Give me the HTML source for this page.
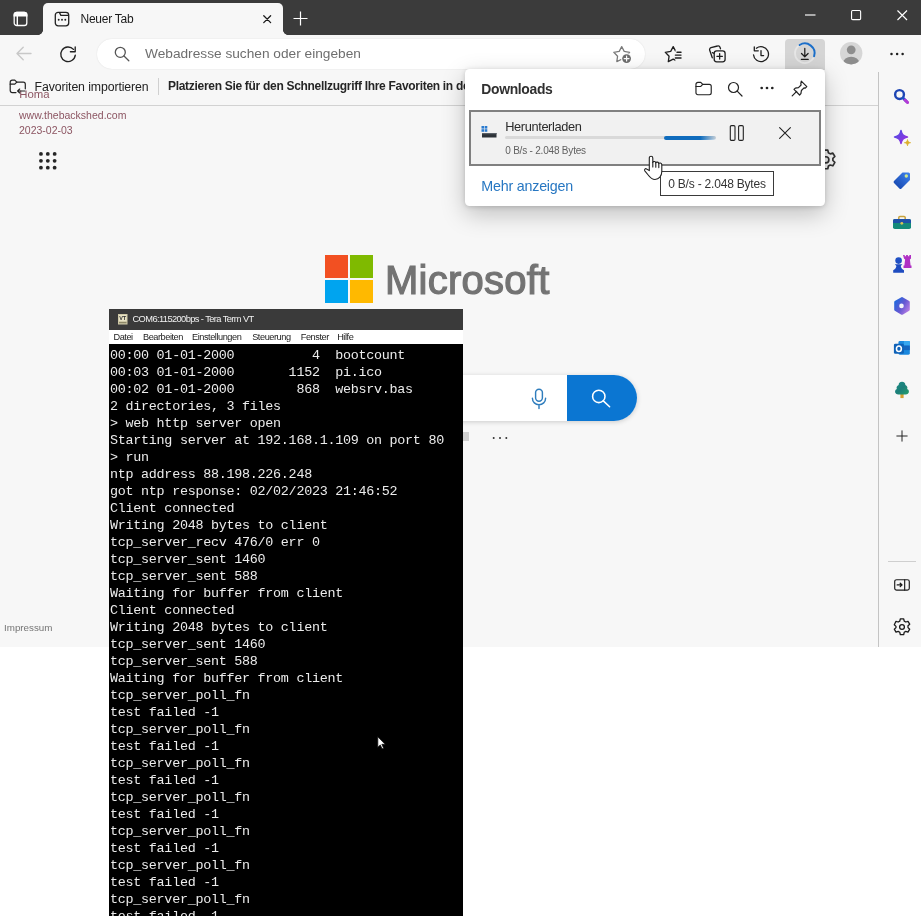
<!DOCTYPE html>
<html lang="de"><head><meta charset="utf-8"><title>Neuer Tab</title>
<style>
*{box-sizing:border-box;margin:0;padding:0}
html,body{width:921px;height:916px;overflow:hidden;background:#fff;font-family:"Liberation Sans",sans-serif;}
#root{will-change:transform;position:relative;width:921px;height:916px;overflow:hidden;background:#fff}
.abs{position:absolute}
#titlebar{left:0;top:0;width:921px;height:35px;background:#3b3b3b}
#tab{left:43px;top:3px;width:240px;height:32px;background:#f7f7f7;border-radius:5px 5px 0 0}
#tab .t{position:absolute;left:37.5px;top:8.5px;font-size:12px;color:#1b1b1b;white-space:nowrap;letter-spacing:-0.25px}
#toolbar{left:0;top:35px;width:921px;height:37px;background:#f7f7f7}
#addr{left:97px;top:39px;width:548px;height:30px;background:#fff;border-radius:15px;box-shadow:0 0 1.5px rgba(0,0,0,.12)}
#addr .t{position:absolute;left:48px;top:7px;font-size:13.7px;color:#6e6e6e;white-space:nowrap}
#favbar{left:0;top:72px;width:921px;height:33px;background:#f7f7f7}
#page{left:0;top:105px;width:878px;height:542px;background:#f7f7f7;border-top:1px solid #d2d2d2}
#sidebar{left:878px;top:72px;width:43px;height:575px;background:#f7f7f7;border-left:1px solid #c4c4c4}
svg{position:absolute;overflow:visible}
#tmenu span{position:absolute;top:2px}
</style></head><body><div id="root">

<div id="titlebar" class="abs"></div>
<div id="tab" class="abs"><div class="t">Neuer Tab</div></div>
<div id="toolbar" class="abs"></div>
<div class="abs" style="left:38px;top:30px;width:5px;height:5px;background:radial-gradient(circle at 0 0,#3b3b3b 4.6px,#f7f7f7 5.2px)"></div>
<div class="abs" style="left:283px;top:30px;width:5px;height:5px;background:radial-gradient(circle at 100% 0,#3b3b3b 4.6px,#f7f7f7 5.2px)"></div>

<div id="addr" class="abs"><div class="t">Webadresse suchen oder eingeben</div></div>
<div id="favbar" class="abs"></div>
<div id="page" class="abs"></div>
<div id="sidebar" class="abs"></div>


<!-- tab actions icon -->
<svg style="left:12.5px;top:11px" width="15" height="15.5" viewBox="0 0 15 15.5" fill="none" stroke="#fff" stroke-width="1.3"><rect x="1.2" y="1.3" width="12.6" height="13.2" rx="2.6"/><path d="M4.3 5V14.5" stroke-width="1.4"/><path d="M1.2 4.9V3.9a2.6 2.6 0 0 1 2.6-2.6h7.4a2.6 2.6 0 0 1 2.6 2.6V4.9z" fill="#fff"/></svg>
<!-- tab favicon -->
<svg style="left:54px;top:11px" width="16" height="16" viewBox="0 0 16 16" fill="none" stroke="#222" stroke-width="1.3" stroke-linejoin="round"><rect x="1.3" y="1.3" width="13.4" height="13.6" rx="2.8"/><path d="M5.4 1.5L6.9 4.4H14.6"/><circle cx="4.7" cy="8.7" r="0.95" fill="#222" stroke="none"/><circle cx="8" cy="8.7" r="0.95" fill="#222" stroke="none"/><circle cx="11.3" cy="8.7" r="0.95" fill="#222" stroke="none"/></svg>
<!-- tab close -->
<svg style="left:263.3px;top:15.4px" width="8.4" height="8.4" viewBox="0 0 11 11" stroke="#1b1b1b" stroke-width="1.7" stroke-linecap="round"><path d="M1 1L10 10M10 1L1 10"/></svg>
<!-- new tab plus -->
<svg style="left:293px;top:11px" width="15" height="15" viewBox="0 0 15 15" stroke="#fff" stroke-width="1.2"><path d="M7.5 0.5V14.5M0.5 7.5H14.5"/></svg>
<!-- window controls -->
<svg style="left:805px;top:14.3px" width="10.5" height="2" viewBox="0 0 11 2" stroke="#fff" stroke-width="1.2"><path d="M0 1H11"/></svg>
<svg style="left:850.7px;top:10.2px" width="10.2" height="10.2" viewBox="0 0 11 11" fill="none" stroke="#fff" stroke-width="1.2"><rect x="0.6" y="0.6" width="9.8" height="9.8" rx="1.2"/></svg>
<svg style="left:897px;top:10px" width="10.5" height="10.5" viewBox="0 0 11 11" stroke="#fff" stroke-width="1.2"><path d="M0.5 0.5L10.5 10.5M10.5 0.5L0.5 10.5"/></svg>
<!-- back -->
<svg style="left:16px;top:46px" width="16" height="15" viewBox="0 0 16 15" fill="none" stroke="#c8c8c8" stroke-width="1.4" stroke-linecap="round" stroke-linejoin="round"><path d="M15 7.5H1.2M7.2 1.2L1 7.5L7.2 13.8"/></svg>
<!-- refresh -->
<svg style="left:59px;top:45px" width="18" height="18" viewBox="0 0 18 18" fill="none" stroke="#222" stroke-width="1.35" stroke-linecap="round" stroke-linejoin="round"><path d="M14.5 4.4A7.3 7.3 0 1 0 16.3 10.2"/><path d="M16.2 1.9V6.7H11.4"/></svg>
<!-- addr search icon -->
<svg style="left:114px;top:46px" width="16" height="16" viewBox="0 0 16 16" fill="none" stroke="#555" stroke-width="1.3" stroke-linecap="round"><circle cx="6.3" cy="6.3" r="5"/><path d="M10 10L14.8 14.8"/></svg>
<!-- add favorite star -->
<svg style="left:0;top:0" width="921" height="80" viewBox="0 0 921 80" fill="none" stroke-linejoin="round" stroke-linecap="round"><path d="M621.7 46.6 L624.2 51.4 L629.6 52.3 L625.8 56.2 L626.6 61.6 L621.7 59.2 L616.8 61.6 L617.6 56.2 L613.8 52.3 L619.2 51.4Z" stroke="#7a7a7a" stroke-width="1.25"/><circle cx="626.6" cy="58.6" r="5.6" fill="#fff"/><circle cx="626.6" cy="58.6" r="4.4" fill="#6e6e6e"/><path d="M626.6 56.2v4.8M624.2 58.6h4.8" stroke="#fff" stroke-width="1.2"/></svg>
<!-- favorites -->
<svg style="left:0;top:0" width="921" height="80" viewBox="0 0 921 80" fill="none" stroke="#1f1f1f" stroke-width="1.3" stroke-linejoin="round" stroke-linecap="round"><path d="M673.2 46.6 L675.7 51.4 L681.1 52.3 L677.3 56.2 L678.1 61.6 L673.2 59.2 L668.3 61.6 L669.1 56.2 L665.3 52.3 L670.7 51.4Z"/><rect x="675.3" y="50.4" width="8" height="13" fill="#f7f7f7" stroke="none"/><path d="M677 52.3H681M675.4 55.1H681M675.4 57.9H681" stroke-width="1.45"/></svg>
<!-- collections -->
<svg style="left:0;top:0" width="921" height="80" viewBox="0 0 921 80" fill="none" stroke="#1f1f1f" stroke-width="1.3" stroke-linejoin="round" stroke-linecap="round"><path d="M712.3 57.8 709.7 50.3a2 2 0 0 1 1.3-2.6l6.5-1.7a2 2 0 0 1 2.5 1.3l.5 1.5"/><path d="M714.2 53.5 712.4 52.6"/><rect x="714.2" y="50.9" width="10.9" height="10.9" rx="2.5" fill="#f7f7f7"/><path d="M719.65 53.6v5.5M716.9 56.35h5.5"/></svg>
<!-- history -->
<svg style="left:0;top:0" width="921" height="80" viewBox="0 0 921 80" fill="none" stroke="#1f1f1f" stroke-width="1.3" stroke-linejoin="round" stroke-linecap="round"><path d="M756.4 48.2A7.5 7.5 0 1 1 753.5 54.8"/><path d="M754.3 46.8V50.8H758.3"/><path d="M761 50.6V55.6H763.6"/></svg>
<!-- downloads button -->
<div class="abs" style="left:785.4px;top:39px;width:39.4px;height:31px;background:#d5d5d5;border-radius:4px 4px 0 0"></div>
<svg style="left:0;top:0" width="921" height="80" viewBox="0 0 921 80" fill="none" stroke-linecap="round" stroke-linejoin="round"><circle cx="804.8" cy="53.3" r="9.8" stroke="#e6e6e6" stroke-width="1.8"/><path d="M799.6 45.0A9.8 9.8 0 0 1 814.1 56.3" stroke="#1b6ec8" stroke-width="2"/><path d="M804.8 48.4V56.6M801.5 53.5L804.8 56.8L808.1 53.5M801.4 59.4H808.2" stroke="#1f1f1f" stroke-width="1.25"/></svg>
<!-- profile -->
<svg style="left:839.5px;top:42.4px" width="22.4" height="22.4" viewBox="0 0 24 24"><defs><clipPath id="pc"><circle cx="12" cy="12" r="12"/></clipPath></defs><circle cx="12" cy="12" r="12" fill="#d6d6d6"/><g clip-path="url(#pc)" fill="#8d8d8d"><circle cx="12" cy="8.4" r="4.7"/><ellipse cx="12" cy="22.3" rx="8.6" ry="6.5"/></g></svg>
<!-- more -->
<svg style="left:889px;top:51.9px" width="16" height="4" viewBox="0 0 16 4" fill="#1f1f1f"><circle cx="2.5" cy="2" r="1.25"/><circle cx="8.1" cy="2" r="1.25"/><circle cx="13.6" cy="2" r="1.25"/></svg>
<!-- favbar -->
<svg style="left:9.3px;top:78.6px;z-index:1" width="18" height="16" viewBox="0 0 18 16" fill="none" stroke="#222" stroke-width="1.2" stroke-linejoin="round" stroke-linecap="round"><path d="M7 13.6H3.2a2 2 0 0 1-2-2V3.2a2 2 0 0 1 2-2h2.6l2 2h6.5a2 2 0 0 1 2 2V9.8"/><path d="M1.2 5.2h4.6l2-2"/><path d="M15.9 12H8.8M10.7 10l-2.1 2 2.1 2" stroke-width="1.1"/></svg>
<div class="abs" style="left:34.5px;top:79.5px;font-size:12.3px;color:#222;white-space:nowrap;letter-spacing:-0.1px">Favoriten importieren</div>
<div class="abs" style="left:158px;top:78px;width:1px;height:17px;background:#d0d0d0"></div>
<div class="abs" style="left:168px;top:79px;width:297px;overflow:hidden;font-size:12px;font-weight:bold;color:#262626;white-space:nowrap;letter-spacing:-0.3px">Platzieren Sie für den Schnellzugriff Ihre Favoriten in der Favoritenleiste.</div>

<!-- sidebar icons -->
<svg style="left:892.7px;top:87.6px" width="16.8" height="16.8" viewBox="0 0 18 18" fill="none"><defs><linearGradient id="g1" x1="0" y1="0" x2="1" y2="1"><stop offset="0" stop-color="#1a52c8"/><stop offset=".6" stop-color="#2a3fc0"/><stop offset="1" stop-color="#b03ad8"/></linearGradient></defs><circle cx="7" cy="7" r="4.7" stroke="#1d45b4" stroke-width="2.6"/><path d="M11 11L15.6 15.6" stroke="url(#g1)" stroke-width="3" stroke-linecap="round"/><path d="M12.8 12.8L15.6 15.6" stroke="#b23bd6" stroke-width="3" stroke-linecap="round"/></svg>
<svg style="left:893px;top:129.3px" width="20" height="20" viewBox="0 0 20 20"><defs><linearGradient id="g2" x1="0" y1="0" x2="1" y2="1"><stop offset="0" stop-color="#4a4de6"/><stop offset="1" stop-color="#a030dc"/></linearGradient></defs><path d="M8 1.6C8.6 5.2 10.8 7.4 14.4 8 10.8 8.6 8.6 10.8 8 14.4 7.4 10.8 5.2 8.6 1.6 8 5.2 7.4 7.4 5.2 8 1.6z" fill="url(#g2)" stroke="url(#g2)" stroke-width="1.6" stroke-linejoin="round"/><path d="M14.5 10.6c.3 1.9 1.2 2.8 3.1 3.1-1.9.3-2.8 1.2-3.1 3.1-.3-1.9-1.2-2.8-3.1-3.1 1.9-.3 2.8-1.2 3.1-3.1z" fill="#dcb02e" stroke="#dcb02e" stroke-width=".8" stroke-linejoin="round"/></svg>
<svg style="left:892px;top:170px" width="20" height="20" viewBox="0 0 20 20"><defs><linearGradient id="g3" x1="0" y1="1" x2="1" y2="0"><stop offset="0" stop-color="#1240a8"/><stop offset="1" stop-color="#3f84ee"/></linearGradient></defs><path d="M10.5 2.5h6a1.5 1.5 0 0 1 1.5 1.5v6L9.5 18.5a1.5 1.5 0 0 1-2.1 0L2 13a1.5 1.5 0 0 1 0-2.1z" fill="url(#g3)"/><circle cx="14.3" cy="6" r="1.7" fill="#cfe88a"/></svg>
<svg style="left:892px;top:213px" width="20" height="18" viewBox="0 0 20 18"><path d="M6.8 6.5V4.6a1.2 1.2 0 0 1 1.2-1.2h4a1.2 1.2 0 0 1 1.2 1.2v1.9" fill="none" stroke="#c8a23c" stroke-width="1.5"/><rect x="1" y="6" width="18" height="10" rx="1.8" fill="#14897a"/><path d="M1 10V7.8A1.8 1.8 0 0 1 2.8 6h14.4A1.8 1.8 0 0 1 19 7.8V10z" fill="#1e50a8"/><circle cx="9.8" cy="10.3" r="1.4" fill="#d8c455"/></svg>
<svg style="left:891px;top:253px" width="22" height="22" viewBox="0 0 22 22"><path d="M12 2h1.7v1.3h1.4V2h1.8v1.3h1.4V2H20v3.6l-1.1 1 .7 6h.9v2.4h-8V12.6h.9l.7-6-1.1-1z" fill="#b030c4"/><circle cx="7.6" cy="7.6" r="3.3" fill="#2050c4"/><path d="M3.8 11.2h7.6l-1.6 1.7c.4 2.2 1.6 3.4 3.2 4.4v2.5H2.2v-2.5c1.6-1 2.8-2.2 3.2-4.4z" fill="#1f4cc0"/></svg>
<svg style="left:892px;top:296px" width="20" height="20" viewBox="0 0 20 20"><defs><linearGradient id="g6" x1="0" y1="0.2" x2="1" y2="0.9"><stop offset="0" stop-color="#2468dc"/><stop offset=".5" stop-color="#6458d2"/><stop offset="1" stop-color="#ba7ee4"/></linearGradient></defs><path d="M10 2.2l6.6 3.8v7.8L10 17.6l-6.6-3.8V6z" fill="url(#g6)" stroke="url(#g6)" stroke-width="2.4" stroke-linejoin="round"/><circle cx="9.5" cy="9.9" r="2.3" fill="#f4f4fa"/></svg>
<svg style="left:893.2px;top:338.6px" width="18.2" height="18.6" viewBox="0 0 20 20"><rect x="6" y="2" width="12.5" height="15.0" rx="1.5" fill="#1a88de"/><rect x="12" y="2" width="6.5" height="5" fill="#36a7f0"/><rect x="12" y="7" width="6.5" height="5" fill="#1466c0"/><rect x="1" y="5" width="11.0" height="11.0" rx="1.5" fill="#0f62b8"/><ellipse cx="6.5" cy="10.5" rx="2.7" ry="3" fill="none" stroke="#fff" stroke-width="1.7"/></svg>
<svg style="left:892.7px;top:381.3px" width="18" height="17.5" viewBox="0 0 20 21" preserveAspectRatio="none"><defs><linearGradient id="g8" x1="0" y1="0" x2="1" y2="1"><stop offset="0" stop-color="#1c8f86"/><stop offset=".5" stop-color="#1c7f7a"/><stop offset="1" stop-color="#27a06a"/></linearGradient></defs><rect x="8.2" y="14.5" width="3.6" height="6" fill="#d6a032"/><path d="M10 1c2.4 0 3.9 1.8 3.7 3.9 2 .8 2.9 3 2 4.8 2.2 1 2.8 3.8.9 5.5-1.3 1.1-3.3 1.1-6.6 1.1s-5.3 0-6.6-1.1c-1.9-1.7-1.3-4.5.9-5.5-.9-1.8 0-4 2-4.8C6.1 2.8 7.6 1 10 1z" fill="url(#g8)"/></svg>
<svg style="left:895.7px;top:429.7px" width="12" height="12" viewBox="0 0 14 14" stroke="#222" stroke-width="1.15"><path d="M7 0.5V13.5M0.5 7H13.5"/></svg>
<div class="abs" style="left:888px;top:561px;width:28px;height:1px;background:#cfcfcf"></div>
<svg style="left:894px;top:578.9px" width="16" height="11.8" viewBox="0 0 18 14" preserveAspectRatio="none" fill="none" stroke="#1b1b1b" stroke-width="1.3" stroke-linejoin="round" stroke-linecap="round"><rect x="0.8" y="0.8" width="16.4" height="12.4" rx="2.2"/><path d="M12 0.8V13.2"/><path d="M3.6 7H9M7 5l2 2-2 2" stroke-width="1.5"/></svg>
<svg style="left:892.2px;top:617.1px" width="20" height="20" viewBox="0 0 20 20" fill="none" stroke="#1b1b1b" stroke-width="1.3" stroke-linejoin="round"><path d="M8.3 1.8h3.4l.5 2.3 1.6.9 2.2-.7 1.7 2.9-1.7 1.6v1.8l1.7 1.6-1.7 2.9-2.2-.7-1.6.9-.5 2.3H8.3l-.5-2.3-1.6-.9-2.2.7-1.7-2.9 1.7-1.6V9.4L2.3 7.8 4 4.3l2.2.7 1.6-.9z"/><circle cx="10" cy="10" r="2.4"/></svg>
<!--SECTION:chrome-icons-->

<!-- watermark -->
<div class="abs" style="left:19.2px;top:87.6px;font-size:11.4px;line-height:13px;color:#8c5562;white-space:nowrap;clip-path:inset(3px 0 0 0)">Homa</div>
<div class="abs" style="left:19px;top:109px;font-size:10.5px;color:#8c5562;white-space:nowrap">www.thebackshed.com</div>
<div class="abs" style="left:19px;top:124px;font-size:10.5px;color:#8c5562;white-space:nowrap">2023-02-03</div>
<!-- app grid -->
<svg style="left:39.4px;top:152.4px" width="17.6" height="17.6" viewBox="0 0 18 18" fill="#262626"><circle cx="2" cy="2" r="1.95"/><circle cx="9" cy="2" r="1.95"/><circle cx="16" cy="2" r="1.95"/><circle cx="2" cy="9" r="1.95"/><circle cx="9" cy="9" r="1.95"/><circle cx="16" cy="9" r="1.95"/><circle cx="2" cy="16" r="1.95"/><circle cx="9" cy="16" r="1.95"/><circle cx="16" cy="16" r="1.95"/></svg>
<!-- page settings gear (partly hidden) -->
<svg style="left:813.6px;top:148.2px" width="23.6" height="23.6" viewBox="0 0 20 20" fill="none" stroke="#333" stroke-width="1.4" stroke-linejoin="round"><path d="M8.3 1.8h3.4l.5 2.3 1.6.9 2.2-.7 1.7 2.9-1.7 1.6v1.8l1.7 1.6-1.7 2.9-2.2-.7-1.6.9-.5 2.3H8.3l-.5-2.3-1.6-.9-2.2.7-1.7-2.9 1.7-1.6V9.4L2.3 7.8 4 4.3l2.2.7 1.6-.9z"/><circle cx="10" cy="10" r="2.6"/></svg>
<!-- Microsoft logo -->
<div class="abs" style="left:325px;top:255px;width:23px;height:23px;background:#f25022"></div>
<div class="abs" style="left:350px;top:255px;width:23px;height:23px;background:#7fba00"></div>
<div class="abs" style="left:325px;top:280px;width:23px;height:23px;background:#00a4ef"></div>
<div class="abs" style="left:350px;top:280px;width:23px;height:23px;background:#ffb900"></div>
<div id="mslogo" class="abs" style="left:385px;top:255.5px;font-size:40px;line-height:48px;color:#737373;white-space:nowrap;letter-spacing:0.25px;-webkit-text-stroke:1.2px #737373">Microsoft</div>
<!-- search box -->
<div class="abs" style="left:241px;top:375px;width:396px;height:46px;border-radius:23px;background:#fff;box-shadow:0 1px 5px rgba(0,0,0,.18);overflow:hidden"><div class="abs" style="left:326px;top:0;width:70px;height:46px;background:#0b76d2"></div></div>
<svg style="left:529px;top:388px" width="20" height="22" viewBox="0 0 20 22" fill="none" stroke="#2f7dbd" stroke-width="1.45" stroke-linecap="round"><rect x="6.6" y="1.2" width="6.8" height="12" rx="3.4"/><path d="M3.4 10.2a6.6 6.6 0 0 0 13.2 0M10 16.8V20.5"/></svg>
<svg style="left:590px;top:387px" width="22" height="22" viewBox="0 0 22 22" fill="none" stroke="#fff" stroke-width="1.55" stroke-linecap="round"><circle cx="8.8" cy="9.4" r="6.2"/><path d="M13.3 13.9L19.6 19.8"/></svg>
<div class="abs" style="left:463px;top:432px;width:6px;height:9px;background:#cfcfcf"></div>
<svg style="left:492px;top:436px" width="16" height="4" viewBox="0 0 16 4" fill="#333"><circle cx="1.7" cy="2" r="1"/><circle cx="8" cy="2" r="1"/><circle cx="14.3" cy="2" r="1"/></svg>
<div class="abs" style="left:4px;top:622px;font-size:9.8px;color:#767676;white-space:nowrap">Impressum</div>
<!--SECTION:page-->

<div id="dl" class="abs" style="left:465px;top:69px;width:360px;height:137px;background:#fff;border-radius:4.5px;box-shadow:0 8px 24px rgba(0,0,0,.23),0 1px 5px rgba(0,0,0,.16)"></div>
<div class="abs" style="left:481.3px;top:81.3px;font-size:13.9px;font-weight:bold;color:#303030;white-space:nowrap;letter-spacing:-0.32px" id="dlh">Downloads</div>
<!-- folder -->
<svg style="left:694.6px;top:81.4px" width="17.4" height="15" viewBox="0 0 18 15" fill="none" stroke="#222" stroke-width="1.2" stroke-linejoin="round" stroke-linecap="round"><path d="M1 3.2a2 2 0 0 1 2-2h3l2 2h6.8a2 2 0 0 1 2 2v6.8a2 2 0 0 1-2 2H3a2 2 0 0 1-2-2z"/><path d="M1 5.4h5l2-2.2"/></svg>
<!-- search -->
<svg style="left:727px;top:81px" width="16" height="16" viewBox="0 0 16 16" fill="none" stroke="#222" stroke-width="1.2" stroke-linecap="round"><circle cx="6.5" cy="6.5" r="5"/><path d="M10.2 10.2L15 15"/></svg>
<!-- dots -->
<svg style="left:760px;top:85.9px" width="14" height="4" viewBox="0 0 14 4" fill="#222"><circle cx="1.7" cy="2" r="1.35"/><circle cx="7" cy="2" r="1.35"/><circle cx="12.3" cy="2" r="1.35"/></svg>
<!-- pin -->
<svg style="left:791px;top:80px" width="17" height="17" viewBox="0 0 17 17" fill="none" stroke="#222" stroke-width="1.2" stroke-linejoin="round" stroke-linecap="round"><path d="M10.3 1.2l5.5 5.5-1.5 1.5-1.3-.3-2.6 2.6-.5 3.2-1.3 1.3L3 9.4l1.3-1.3 3.2-.5 2.6-2.6-.3-1.3z"/><path d="M5.7 11.3L1.2 15.8"/></svg>
<!-- item -->
<div class="abs" style="left:469px;top:110px;width:352px;height:56px;background:#f1f1f1;border:2px solid #808080"></div>
<svg style="left:481px;top:126px" width="16" height="12" viewBox="0 0 16 12"><rect x="0.5" y="0" width="2.6" height="2.6" fill="#2a7bd0"/><rect x="3.7" y="0" width="2.6" height="2.6" fill="#2a7bd0"/><rect x="0.5" y="3.2" width="2.6" height="2.6" fill="#2a7bd0"/><rect x="3.7" y="3.2" width="2.6" height="2.6" fill="#2a7bd0"/><rect x="1" y="7" width="14.5" height="4.5" fill="#2d3238"/><rect x="1" y="7" width="14.5" height="1.2" fill="#5a6068"/></svg>
<div class="abs" style="left:505.2px;top:119.3px;font-size:12.8px;color:#2b2b2b;white-space:nowrap;letter-spacing:-0.37px" id="dlt">Herunterladen</div>
<div class="abs" style="left:505px;top:136px;width:211px;height:3px;background:#d9d9d9;border-radius:2px"></div>
<div class="abs" style="left:664px;top:136px;width:52px;height:4px;border-radius:2px;background:linear-gradient(90deg,#0f6cbd 0,#0f6cbd 70%,rgba(15,108,189,0.1) 100%)"></div>
<div class="abs" style="left:505.2px;top:144.8px;font-size:10px;color:#616161;white-space:nowrap;letter-spacing:-0.2px" id="dls">0 B/s - 2.048 Bytes</div>
<!-- pause -->
<svg style="left:729px;top:125px" width="16" height="16" viewBox="0 0 16 16" fill="none" stroke="#222" stroke-width="1.1"><rect x="1.3" y="0.6" width="4.7" height="14.8" rx="1.2"/><rect x="9.6" y="0.6" width="4.7" height="14.8" rx="1.2"/></svg>
<!-- close -->
<svg style="left:779px;top:127px" width="12" height="12" viewBox="0 0 12 12" stroke="#222" stroke-width="1.1" stroke-linecap="round"><path d="M0.6 0.6L11.4 11.4M11.4 0.6L0.6 11.4"/></svg>
<div class="abs" style="left:481.3px;top:178.2px;font-size:14.3px;color:#2777c2;white-space:nowrap;letter-spacing:-0.22px" id="dlm">Mehr anzeigen</div>
<!-- tooltip -->
<div class="abs" style="left:660px;top:171px;width:114px;height:25px;background:#fff;border:1px solid #3a3a3a"></div>
<div class="abs" style="left:668.2px;top:177px;font-size:12px;color:#333;white-space:nowrap;letter-spacing:-0.2px" id="dltt">0 B/s - 2.048 Bytes</div>
<!--SECTION:downloads-->
<div id="term" class="abs" style="left:109px;top:309px;width:354px;height:607px;background:#000;overflow:hidden">
<div class="abs" style="left:0;top:0;width:354px;height:20.5px;background:#3a3a3a"></div>
<svg style="left:8.5px;top:4.7px" width="9.5" height="10.5" viewBox="0 0 9.5 10.5"><rect x="0" y="0" width="9.5" height="10.5" fill="#cfc9a8"/><rect x="1" y="1" width="7.5" height="6" fill="#e8e3c4"/><text x="1.2" y="6.3" font-family="Liberation Sans, sans-serif" font-size="5.5" font-weight="bold" fill="#333">VT</text><rect x="1" y="8" width="7.5" height="1.3" fill="#8d8868"/></svg>
<div class="abs" style="left:23.5px;top:5px;font-size:9.3px;letter-spacing:-0.6px;color:#f2f2f2;white-space:nowrap">COM6:115200bps - Tera Term VT</div>
<div class="abs" id="tmenu" style="left:0;top:20.5px;width:354px;height:14.5px;background:#fff;font-size:9.2px;letter-spacing:-0.45px;color:#222;white-space:nowrap">
<span style="left:4.5px">Datei</span><span style="left:34px">Bearbeiten</span><span style="left:83px">Einstellungen</span><span style="left:143.2px">Steuerung</span><span style="left:191.8px">Fenster</span><span style="left:228.2px">Hilfe</span></div>
<pre id="tbody" class="abs" style="left:1px;top:37.7px;font-family:'Liberation Mono',monospace;font-size:13.4px;line-height:17px;color:#ececec;letter-spacing:-0.27px">00:00 01-01-2000          4  bootcount
00:03 01-01-2000       1152  pi.ico
00:02 01-01-2000        868  websrv.bas
2 directories, 3 files
&gt; web http server open
Starting server at 192.168.1.109 on port 80
&gt; run
ntp address 88.198.226.248
got ntp response: 02/02/2023 21:46:52
Client connected
Writing 2048 bytes to client
tcp_server_recv 476/0 err 0
tcp_server_sent 1460
tcp_server_sent 588
Waiting for buffer from client
Client connected
Writing 2048 bytes to client
tcp_server_sent 1460
tcp_server_sent 588
Waiting for buffer from client
tcp_server_poll_fn
test failed -1
tcp_server_poll_fn
test failed -1
tcp_server_poll_fn
test failed -1
tcp_server_poll_fn
test failed -1
tcp_server_poll_fn
test failed -1
tcp_server_poll_fn
test failed -1
tcp_server_poll_fn
test failed -1</pre>
</div>
<!--SECTION:terminal-->

<!-- hand cursor -->
<svg style="left:644px;top:156px" width="19" height="25" viewBox="0 0 19 25" fill="#fff" stroke="#222" stroke-width="1.1" stroke-linejoin="round" stroke-linecap="round"><path d="M5.3 14.6V2a1.75 1.75 0 0 1 3.5 0V6.4c.3-1.4 2.9-1.3 3 .5.4-1.2 2.8-1 3 .7.5-1.1 2.8-.8 3 1V15.5c0 4.6-2.8 8-6.8 8-3.2 0-5-2-6.8-4.5L.8 14.8c-.9-1.3.6-2.7 1.8-1.8z"/><path d="M8.8 6.4V11M11.8 6.9V11.3M14.8 7.6V11.6" fill="none"/></svg>
<!-- arrow cursor -->
<svg style="left:377.2px;top:735.8px" width="9.4" height="14" viewBox="0 0 12 18"><path d="M1 1v13.5l3.2-3 2.3 5 2-.9-2.3-4.9h4.3z" fill="#fff" stroke="#111" stroke-width="1" stroke-linejoin="round"/></svg>
<!--SECTION:cursors-->

</div></body></html>
